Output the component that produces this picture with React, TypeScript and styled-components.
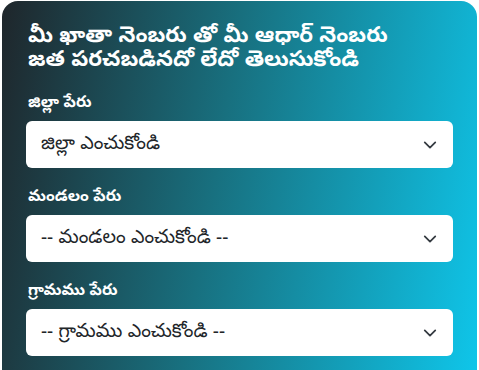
import React from "react";
import styled, { createGlobalStyle } from "styled-components";

const Global = createGlobalStyle`
  html, body { margin: 0; padding: 0; background: #ffffff; }
  body { font-family: "Noto Sans Telugu", "Noto Sans", "Liberation Sans", sans-serif; }
`;

const Card = styled.div`
  margin: 1px 2px 0 2px;
  width: 475px;
  height: 380px;
  box-sizing: border-box;
  border-radius: 16px 16px 0 0;
  background: linear-gradient(100deg, #1f262b 0%, #18707f 45%, #0fc6ea 100%);
  padding: 25px 24px 0 24px;
  display: flex;
  flex-direction: column;
`;

const Title = styled.h2`
  margin: 0 0 20px 2px;
  color: #ffffff;
  font-size: 22px;
  font-weight: 700;
  line-height: 24px;
`;

const Group = styled.div`
  display: flex;
  flex-direction: column;
  margin-bottom: 20px;
`;

const Label = styled.label`
  color: #ffffff;
  font-size: 16px;
  font-weight: 700;
  line-height: 20px;
  margin: 0 0 7px 2px;
`;

const SelectBox = styled.div`
  height: 47px;
  background: #ffffff;
  border-radius: 6px;
  display: flex;
  align-items: center;
  justify-content: space-between;
  padding: 0 16px 0 15px;
  box-sizing: border-box;
  color: #212529;
  font-size: 19px;
`;

const Chevron = () => (
  <svg width="14" height="14" viewBox="0 0 16 16" fill="none">
    <path d="M2 5l6 6 6-6" stroke="#343a40" strokeWidth="2" strokeLinecap="round" strokeLinejoin="round" />
  </svg>
);

const fields = [
  { label: "జిల్లా పేరు", placeholder: "జిల్లా ఎంచుకోండి" },
  { label: "మండలం పేరు", placeholder: "-- మండలం ఎంచుకోండి --" },
  { label: "గ్రామము పేరు", placeholder: "-- గ్రామము ఎంచుకోండి --" },
];

export default function App() {
  return (
    <>
      <Global />
      <Card>
        <Title>
          మీ ఖాతా నెంబరు తో మీ ఆధార్ నెంబరు
          <br />
          జత పరచబడినదో లేదో తెలుసుకోండి
        </Title>
        {fields.map((f) => (
          <Group key={f.label}>
            <Label>{f.label}</Label>
            <SelectBox>
              <span>{f.placeholder}</span>
              <Chevron />
            </SelectBox>
          </Group>
        ))}
      </Card>
    </>
  );
}
